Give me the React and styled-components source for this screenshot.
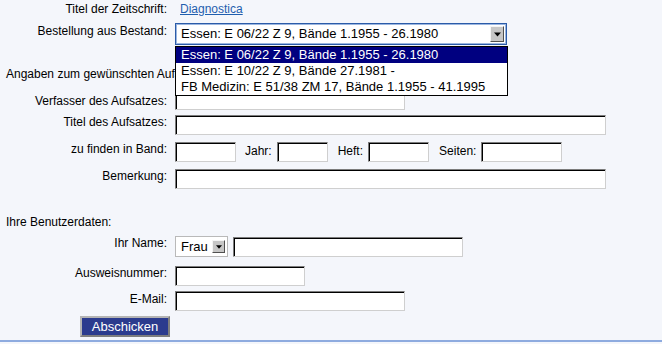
import styled, { createGlobalStyle } from 'styled-components'

const GlobalStyle = createGlobalStyle`
  html, body {
    margin: 0;
    padding: 0;
    background: #f4f6fb;
  }
  body {
    font-family: "Liberation Sans", Arial, sans-serif;
    font-size: 12px;
    line-height: 14px;
    color: #000;
  }
`

const Page = styled.div`
  width: 662px;
  height: 344px;
  box-sizing: border-box;
  padding-top: 2px;
  overflow: hidden;
`

// Zeile: Beschriftung links, Feld(er) rechts
const Row = styled.div`
  display: flex;
  align-items: flex-start;
  margin-top: ${(p) => p.$mt || 0}px;
`

const Label = styled.div`
  width: 175px;
  flex-shrink: 0;
  box-sizing: border-box;
  padding-right: 8px;
  padding-top: ${(p) => p.$pt || 0}px;
  text-align: right;
  white-space: nowrap;
`

const Link = styled.a`
  margin-left: 5px;
  color: #1f5eae;
  text-decoration: underline;
  cursor: pointer;
`

const SectionTitle = styled.div`
  padding-left: 6px;
  margin-top: ${(p) => p.$mt || 0}px;
  white-space: nowrap;
`

// Klappliste (aufgeklappt)
const SelectWrap = styled.div`
  position: relative;
`

const SelectBox = styled.div`
  width: ${(p) => p.$w}px;
  height: ${(p) => p.$h}px;
  box-sizing: border-box;
  display: flex;
  align-items: center;
  justify-content: space-between;
  background: #fff;
  border: 1px solid ${(p) => (p.$focus ? '#2b5ba8' : '#b9b9b9')};
  box-shadow: ${(p) => (p.$focus ? 'inset 0 0 0 1px #9bb6e0' : 'none')};
  padding: 0 2px 0 5px;
  font-size: 13px;
  white-space: nowrap;
`

const ArrowButton = styled.div`
  width: ${(p) => p.$w}px;
  height: ${(p) => p.$h}px;
  box-sizing: border-box;
  flex-shrink: 0;
  display: flex;
  align-items: center;
  justify-content: center;
  background: #c6c6c6;
  border: 1px solid;
  border-color: #f4f4f4 #505050 #505050 #f4f4f4;
`

const DropList = styled.div`
  position: absolute;
  left: 0;
  top: calc(100% + 1px);
  width: 333px;
  box-sizing: border-box;
  background: #fff;
  border: 1px solid #000;
  z-index: 2;
`

const Option = styled.div`
  height: 16px;
  line-height: 16px;
  padding-left: 5px;
  font-size: 13px;
  white-space: nowrap;
  background: ${(p) => (p.$selected ? '#000080' : '#fff')};
  color: ${(p) => (p.$selected ? '#fff' : '#000')};
`

const TextInput = styled.input`
  width: ${(p) => p.$w}px;
  height: 20px;
  box-sizing: border-box;
  margin: ${(p) => p.$mt || 0}px 0 0 0;
  padding: 0 3px;
  background: #fff;
  border: 1px solid;
  border-color: #7c7c7c #cfcfcf #cfcfcf #7c7c7c;
  box-shadow: inset 1px 1px 0 #000;
  font-family: inherit;
  font-size: 12px;
  outline: none;
`

const InlineLabel = styled.span`
  margin: 2px 5px 0 ${(p) => p.$ml || 10}px;
  white-space: nowrap;
`

const NameGroup = styled.div`
  display: flex;
  align-items: flex-start;
  gap: 5px;
`

const SubmitButton = styled.button`
  margin-left: 80px;
  width: 90px;
  height: 21px;
  box-sizing: border-box;
  padding: 0;
  background: #2b3b8e;
  color: #fff;
  border: 2px solid;
  border-color: #b4b4b4 #7e7e7e #7e7e7e #b4b4b4;
  font-family: "Liberation Sans", Arial, sans-serif;
  font-size: 13px;
  cursor: pointer;
`

const FooterLine = styled.div`
  margin-top: 3px;
  height: 2px;
  background: #8eabdf;
`

function Triangle({ size = 7 }) {
  return (
    <svg width={size} height={Math.ceil(size / 2) + 1} viewBox="0 0 7 4">
      <polygon points="0,0 7,0 3.5,4" fill="#000" />
    </svg>
  )
}

const bestand = [
  'Essen: E 06/22 Z 9, Bände 1.1955 - 26.1980',
  'Essen: E 10/22 Z 9, Bände 27.1981 -',
  'FB Medizin: E 51/38 ZM 17, Bände 1.1955 - 41.1995',
]

export default function App() {
  return (
    <Page>
      <GlobalStyle />

      <Row>
        <Label>Titel der Zeitschrift:</Label>
        <Link>Diagnostica</Link>
      </Row>

      <Row $mt={7}>
        <Label $pt={1}>Bestellung aus Bestand:</Label>
        <SelectWrap>
          <SelectBox $w={332} $h={22} $focus>
            <span>{bestand[0]}</span>
            <ArrowButton $w={14} $h={16}>
              <Triangle />
            </ArrowButton>
          </SelectBox>
          <DropList>
            {bestand.map((b, i) => (
              <Option key={b} $selected={i === 0}>
                {b}
              </Option>
            ))}
          </DropList>
        </SelectWrap>
      </Row>

      <SectionTitle $mt={22}>Angaben zum gewünschten Aufsatz:</SectionTitle>

      <Row $mt={9}>
        <Label $pt={4}>Verfasser des Aufsatzes:</Label>
        <TextInput $w={230} />
      </Row>

      <Row $mt={5}>
        <Label>Titel des Aufsatzes:</Label>
        <TextInput $w={431} />
      </Row>

      <Row $mt={7}>
        <Label>zu finden in Band:</Label>
        <TextInput $w={61} />
        <InlineLabel $ml={9}>Jahr:</InlineLabel>
        <TextInput $w={51} />
        <InlineLabel>Heft:</InlineLabel>
        <TextInput $w={61} />
        <InlineLabel>Seiten:</InlineLabel>
        <TextInput $w={81} />
      </Row>

      <Row $mt={7}>
        <Label>Bemerkung:</Label>
        <TextInput $w={431} />
      </Row>

      <SectionTitle $mt={26}>Ihre Benutzerdaten:</SectionTitle>

      <Row $mt={7}>
        <Label>Ihr Name:</Label>
        <NameGroup>
          <SelectBox $w={53} $h={21}>
            <span>Frau</span>
            <ArrowButton $w={13} $h={13}>
              <Triangle size={6} />
            </ArrowButton>
          </SelectBox>
          <TextInput $w={230} $mt={1} />
        </NameGroup>
      </Row>

      <Row $mt={9}>
        <Label>Ausweisnummer:</Label>
        <TextInput $w={130} />
      </Row>

      <Row $mt={5}>
        <Label $pt={1}>E-Mail:</Label>
        <TextInput $w={230} />
      </Row>

      <Row $mt={5}>
        <SubmitButton type="button">Abschicken</SubmitButton>
      </Row>

      <FooterLine />
    </Page>
  )
}
